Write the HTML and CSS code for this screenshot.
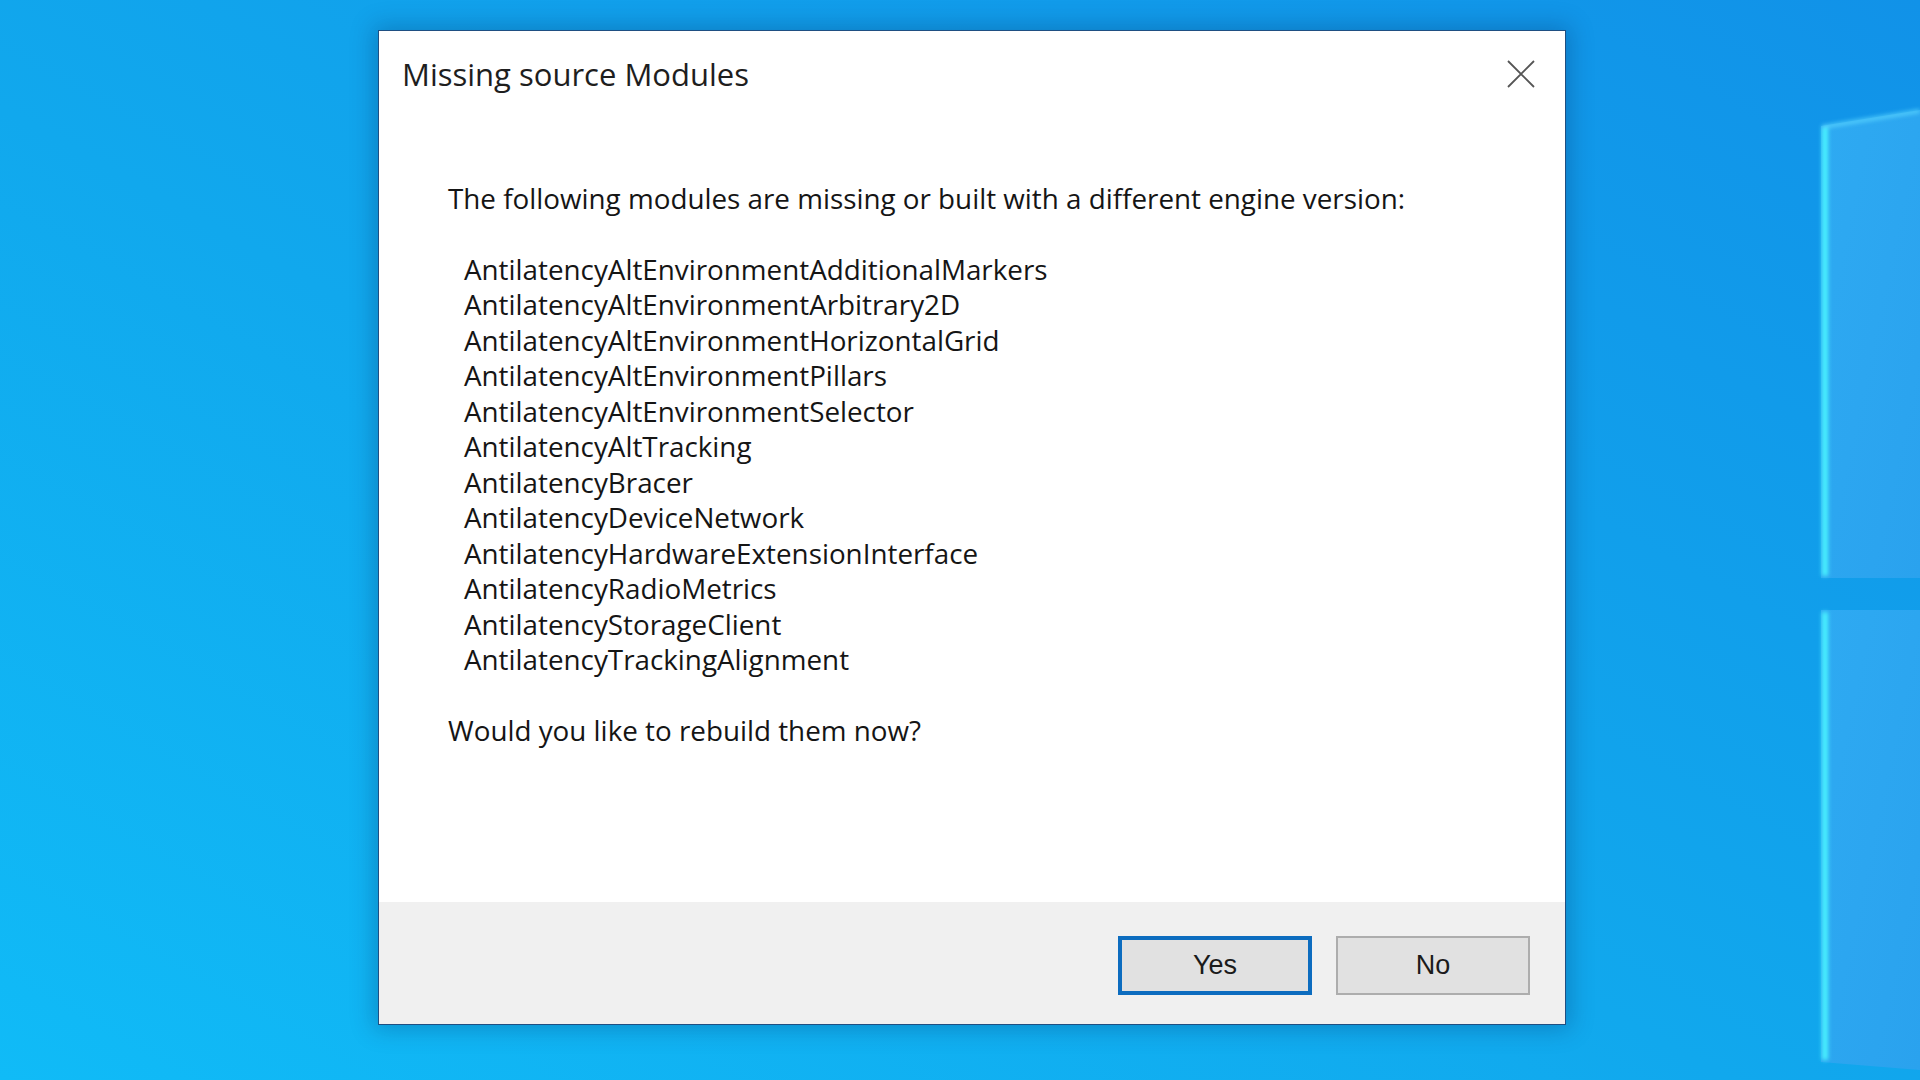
FILE: index.html
```html
<!DOCTYPE html>
<html lang="en">
<head>
<meta charset="utf-8">
<title>Missing source Modules</title>
<link rel="stylesheet" href="styles.css">
</head>
<body>
<div class="desktop">
  <svg class="winlogo" viewBox="0 0 120 1080" width="120" height="1080" aria-hidden="true">
    <defs>
      <linearGradient id="pane" x1="0" y1="0" x2="1" y2="1">
        <stop offset="0" stop-color="#2eaaf2"/>
        <stop offset="1" stop-color="#2aa2ee"/>
      </linearGradient>
      <filter id="glow" x="-50%" y="-5%" width="200%" height="110%">
        <feGaussianBlur stdDeviation="2"/>
      </filter>
    </defs>
    <polygon points="21,126 120,110 120,578 21,578" fill="url(#pane)"/>
    <polygon points="21,610 120,610 120,1070 21,1062" fill="url(#pane)"/>
    <g filter="url(#glow)">
      <line x1="25" y1="127" x2="25" y2="576" stroke="#4af3ff" stroke-width="6"/>
      <line x1="25" y1="612" x2="25" y2="1060" stroke="#4af3ff" stroke-width="6"/>
      <line x1="22" y1="127" x2="120" y2="111" stroke="#5ad6ff" stroke-width="3"/>
    </g>
  </svg>

  <div class="dialog">
    <div class="titlebar">
      <div class="title">Missing source Modules</div>
      <svg class="close" viewBox="0 0 28 28" width="28" height="28" aria-label="Close">
        <path d="M1 1 L27 27 M27 1 L1 27" stroke="#555" stroke-width="1.8" fill="none"/>
      </svg>
    </div>
    <div class="message">
      <p class="lead">The following modules are missing or built with a different engine version:</p>
      <ul class="modules">
        <li>AntilatencyAltEnvironmentAdditionalMarkers</li>
        <li>AntilatencyAltEnvironmentArbitrary2D</li>
        <li>AntilatencyAltEnvironmentHorizontalGrid</li>
        <li>AntilatencyAltEnvironmentPillars</li>
        <li>AntilatencyAltEnvironmentSelector</li>
        <li>AntilatencyAltTracking</li>
        <li>AntilatencyBracer</li>
        <li>AntilatencyDeviceNetwork</li>
        <li>AntilatencyHardwareExtensionInterface</li>
        <li>AntilatencyRadioMetrics</li>
        <li>AntilatencyStorageClient</li>
        <li>AntilatencyTrackingAlignment</li>
      </ul>
      <p class="question">Would you like to rebuild them now?</p>
    </div>
    <div class="footer">
      <button class="btn btn-default" type="button">Yes</button>
      <button class="btn" type="button">No</button>
    </div>
  </div>
</div>
</body>
</html>
```

FILE: styles.css
```css
html, body {
  margin: 0;
  padding: 0;
}

body {
  width: 1920px;
  height: 1080px;
  overflow: hidden;
  background: linear-gradient(to top right, #10bbf7 0%, #11a8ed 45%, #1192e8 100%);
  font-family: "Open Sans", "Noto Sans", sans-serif;
}

.desktop {
  position: relative;
  width: 1920px;
  height: 1080px;
}

.winlogo {
  position: absolute;
  right: 0;
  top: 0;
  display: block;
}

.dialog {
  position: absolute;
  left: 378px;
  top: 30px;
  width: 1188px;
  height: 995px;
  box-sizing: border-box;
  border: 1px solid #1f4f82;
  background: #ffffff;
  display: flex;
  flex-direction: column;
  box-shadow: 0 0 22px 4px rgba(0, 40, 90, 0.28);
}

.titlebar {
  display: flex;
  justify-content: space-between;
  align-items: flex-start;
  padding: 23px 30px 0 23px;
}

.title {
  font-size: 31px;
  line-height: 40px;
  color: #1e1e1e;
}

.close {
  display: block;
  margin-top: 6px;
}

.message {
  flex: 1;
  padding: 86.5px 0 0 69px;
  font-size: 27.8px;
  line-height: 35.5px;
  color: #151515;
}

.lead {
  margin: 0 0 35.5px;
}

.modules {
  list-style: none;
  margin: 0 0 35.5px;
  padding: 0 0 0 16px;
}

.question {
  margin: 0;
}

.footer {
  height: 122px;
  box-sizing: border-box;
  background: #f0f0f0;
  display: flex;
  justify-content: flex-end;
  align-items: flex-start;
  gap: 24px;
  padding: 34px 35px 0 0;
}

.btn {
  width: 194px;
  height: 59px;
  box-sizing: border-box;
  border: 2px solid #adadad;
  background: #e1e1e1;
  font-family: "Liberation Sans", Arial, sans-serif;
  font-size: 27px;
  color: #1b1b1b;
  padding: 0;
  margin: 0;
}

.btn-default {
  border: 4px solid #0c6cbf;
}
```
